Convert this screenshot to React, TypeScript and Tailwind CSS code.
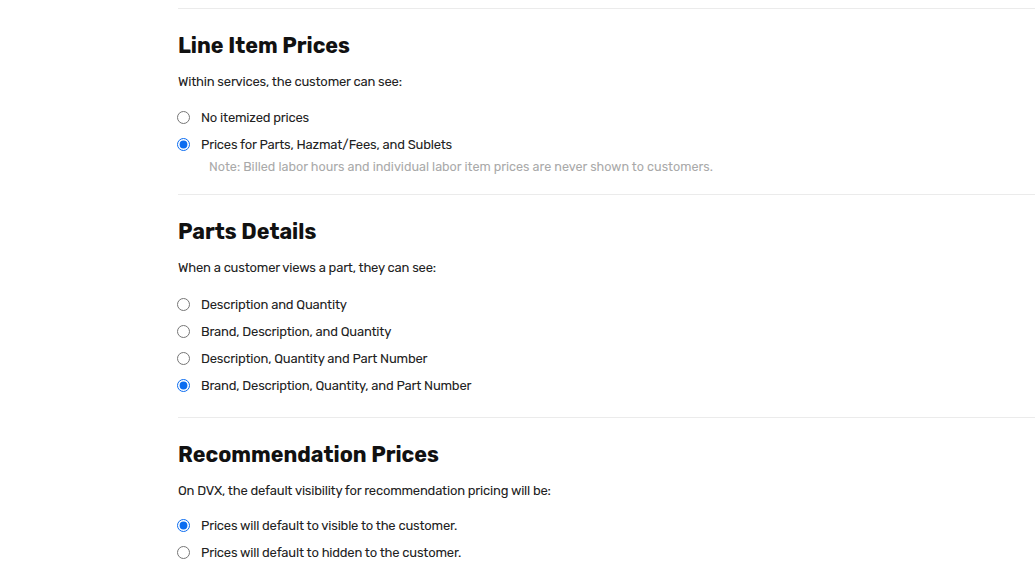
import { useState } from 'react';

interface Option { id: string; label: string; note?: string }

interface SectionProps {
  title: string;
  description: string;
  options: Option[];
  initial: string;
  optionsGap?: string;
}

const Section = ({ title, description, options, initial, optionsGap = 'mt-3' }: SectionProps) => {
  const [value, setValue] = useState(initial);
  const name = title.toLowerCase().replace(/\s+/g, '-');

  return (
    <section className="border-t border-[#ebebeb] pt-[23px] pb-[18px]">
      <h2 className="h-[28px] text-[21.5px] leading-[28px] font-bold text-[#111]">{title}</h2>
      <p className="mt-3 h-5 text-[13px] leading-5 tracking-[-0.2px] text-[#222]">{description}</p>

      <div className={optionsGap}>
        {options.map((opt) => (
          <div key={opt.id}>
            <label className="flex h-[27px] items-center cursor-pointer">
              <input
                type="radio"
                name={name}
                checked={value === opt.id}
                onChange={() => setValue(opt.id)}
                className="m-0 ml-[-1px] h-[13px] w-[13px] shrink-0 accent-[#0b6cf0]"
              />
              <span className="ml-[11px] text-[13px] tracking-[-0.2px] text-[#222]">{opt.label}</span>
            </label>
            {opt.note && (
              <p className="h-[18px] pl-[31px] text-[12.6px] leading-[18px] text-[#a9a9a9]">{opt.note}</p>
            )}
          </div>
        ))}
      </div>
    </section>
  );
};

export default function App() {
  return (
    <div className="min-h-[585px] w-full bg-white pt-2 pl-[178px]" style={{ fontFamily: 'Rubik, Inter, "Noto Sans", sans-serif' }}>
      <Section
        title="Line Item Prices"
        description="Within services, the customer can see:"
        initial="prices"
        options={[
          { id: 'none', label: 'No itemized prices' },
          {
            id: 'prices',
            label: 'Prices for Parts, Hazmat/Fees, and Sublets',
            note: 'Note: Billed labor hours and individual labor item prices are never shown to customers.',
          },
        ]}
      />

      <Section
        title="Parts Details"
        description="When a customer views a part, they can see:"
        initial="all"
        optionsGap="mt-[13px]"
        options={[
          { id: 'dq', label: 'Description and Quantity' },
          { id: 'bdq', label: 'Brand, Description, and Quantity' },
          { id: 'dqp', label: 'Description, Quantity and Part Number' },
          { id: 'all', label: 'Brand, Description, Quantity, and Part Number' },
        ]}
      />

      <Section
        title="Recommendation Prices"
        description="On DVX, the default visibility for recommendation pricing will be:"
        initial="visible"
        optionsGap="mt-[11px]"
        options={[
          { id: 'visible', label: 'Prices will default to visible to the customer.' },
          { id: 'hidden', label: 'Prices will default to hidden to the customer.' },
        ]}
      />
    </div>
  );
}
